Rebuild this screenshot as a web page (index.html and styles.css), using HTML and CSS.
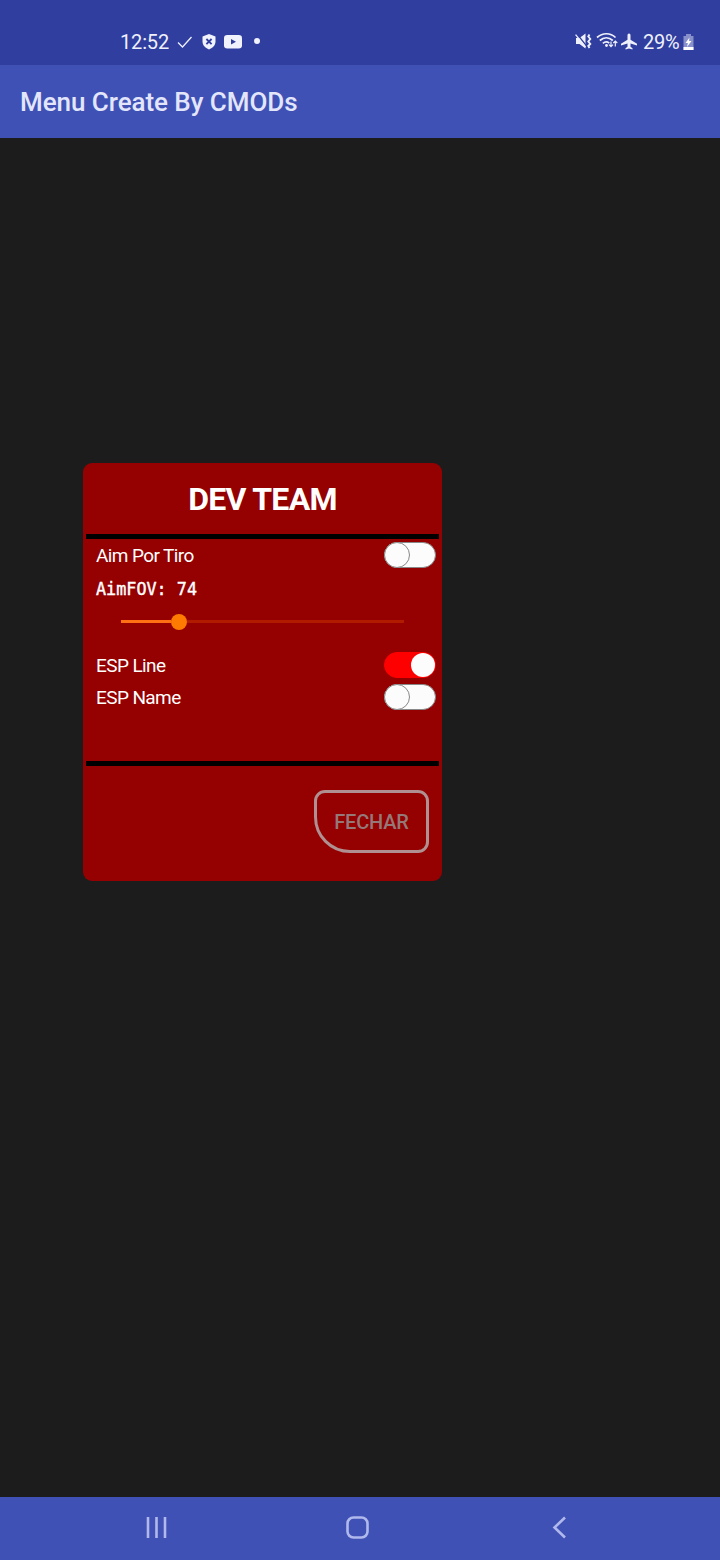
FILE: index.html
```html
<!DOCTYPE html>
<html lang="pt">
<head>
<meta charset="utf-8">
<title>Menu Create By CMODs</title>
<link rel="stylesheet" href="styles.css">
</head>
<body>
<div class="screen">
  <header class="status">
    <span class="clock">12:52</span>
    <svg class="status-left" width="90" height="24" viewBox="174 30 90 24">
      <path d="M178 42.500l4.500 4.500 9-10" fill="none" stroke="#eef0fb" stroke-width="1.300"/>
      <path d="M209 34l6.500 2.400v5c0 3.700-2.600 6.300-6.500 8-3.900-1.700-6.500-4.300-6.500-8v-5z" fill="#f0f2fc"/>
      <path d="M206.400 39l5.200 5.200m0-5.200l-5.200 5.200" stroke="#303e9f" stroke-width="1.800"/>
      <rect x="224" y="35" width="18" height="13.500" rx="3.200" fill="#f0f2fc"/>
      <path d="M231 39l5 2.800-5 2.800z" fill="#303e9f"/>
      <circle cx="257" cy="41" r="3" fill="#f0f2fc"/>
    </svg>
    <svg class="status-right" width="66" height="24" viewBox="573 30 66 24">
      <g fill="#eef0fb">
        <path d="M576 38h3.500l6-4.500v15l-6-4.500h-3.500z"/>
        <path d="M577 34l9.500 12" stroke="#303e9f" stroke-width="1.300"/>
        <path d="M575.600 34.600l9.900 12.400" stroke="#eef0fb" stroke-width="1.300"/>
        <path d="M589.500 34.500l-1.200 2 2 2.500-2 2.500 2 2.500-2 2 1.200 2" fill="none" stroke="#eef0fb" stroke-width="1.900"/>
        <path d="M597 37.500c5.500-5 13.500-5 18.500 0m-15.700 3c4-3.500 9-3.500 13 0m-10 2.800c2.200-1.700 4.500-1.700 6.500-.2" fill="none" stroke="#eef0fb" stroke-width="1.700"/>
        <circle cx="606.500" cy="45.500" r="1.400"/>
        <path d="M611 41.500v5.200m-2-2l2 2 2-2m2.300 1.800v-5.500m-2 2l2-2 2 2" fill="none" stroke="#eef0fb" stroke-width="1.200"/>
        <path d="M629 33.500c1 0 1.500.8 1.500 1.900v4.300l6.500 4v1.800l-6.500-2v3.300l2 1.500v1.200l-3.500-1-3.500 1v-1.200l2-1.500v-3.300l-6.500 2v-1.800l6.500-4v-4.300c0-1.100.5-1.900 1.500-1.900z"/>
      </g>
    </svg>
    <span class="percent">29%</span>
    <svg class="battery" width="11" height="17" viewBox="0 0 11 17">
      <path d="M3 0h5v2h2.500v14H.5V2H3z" fill="#8790ca"/>
      <path d="M.5 13h10v3H.5z" fill="#fff"/>
      <path d="M6.500 3.500L2.500 9h2.400L4 13l4.500-6H6z" fill="#fff"/>
    </svg>
  </header>
  <div class="appbar"><h1>Menu Create By CMODs</h1></div>
  <main class="content">
    <section class="card">
      <h2>DEV TEAM</h2>
      <div class="options">
        <div class="row"><span class="label">Aim Por Tiro</span><span class="switch"></span></div>
        <div class="fov">AimFOV: 74</div>
        <div class="slider"><div class="fill"></div><div class="thumb"></div><div class="rest"></div></div>
        <div class="row"><span class="label">ESP Line</span><span class="switch on"></span></div>
        <div class="row"><span class="label">ESP Name</span><span class="switch"></span></div>
      </div>
      <footer class="actions"><button class="close">FECHAR</button></footer>
    </section>
  </main>
  <nav class="nav">
    <svg width="720" height="63" viewBox="0 1497 720 63" fill="none" stroke="#b0b8ec" stroke-width="2.600">
      <path d="M148 1517v21m8.500-21v21m8.500-21v21"/>
      <rect x="347.500" y="1517.500" width="20" height="20" rx="6"/>
      <path d="M565 1517.500l-10.500 10 10.500 10"/>
    </svg>
  </nav>
</div>
</body>
</html>
```
FILE: styles.css
```css
*, *::before { box-sizing: border-box; }
body { margin: 0; font-family: Roboto, sans-serif; }
.screen { width: 720px; height: 1560px; display: flex; flex-direction: column; background: #1c1c1c; }
.status { height: 65px; background: #303e9f; color: #eef0fb; display: flex; align-items: center; padding: 19px 0 0 120px; font-size: 20px; line-height: 24px; }
.clock { width: 54px; letter-spacing: -0.15px; }
.status svg { display: block; flex: none; }
.status-right { margin-left: 309px; }
.percent { width: 39px; margin-left: 4px; white-space: nowrap; letter-spacing: -0.3px; }
.status .battery { margin: 0 0 0 0.5px; }
.appbar { height: 73px; background: #3f51b5; padding: 21px 20px 0; }
h1 { margin: 0; font-size: 26px; line-height: 32px; font-weight: 500; color: #e3e6fb; letter-spacing: -0.05px; }
.content { flex: 1; padding: 325px 0 0 83px; }
.card { width: 359px; height: 418px; background: #950000; border-radius: 9px; padding: 0 3px; }
h2 { margin: 0; height: 71px; font-size: 32px; line-height: 72px; font-weight: 700; color: #fff; text-align: center; letter-spacing: -0.7px; }
.options { height: 232px; border-top: 5px solid #000; border-bottom: 5px solid #000; }
.row { height: 32px; padding: 0 3px 0 10px; display: flex; align-items: center; justify-content: space-between; }
.label { font-size: 19px; color: #fff; letter-spacing: -0.6px; }
.switch { width: 52px; height: 26px; border-radius: 13px; background: #fcfcfc; border: 1px solid #888; display: flex; }
.switch::before { content: ""; flex: none; width: 26px; height: 26px; margin: -1px; border-radius: 50%; border: 1px solid #888; background: #fcfcfc; }
.on { background: #f00; border-color: #f00; justify-content: flex-end; align-items: center; }
.on::before { width: 24px; height: 24px; margin: 0; border: 0; }
.fov { height: 36px; padding-left: 10px; font: 400 16.8px/36px "DejaVu Sans Mono", monospace; color: #fff; -webkit-text-stroke: 0.4px #fff; }
.slider { height: 42px; padding: 0 35px 13px; display: flex; align-items: center; }
.fill { width: 50px; height: 3px; background: #ff7014; }
.thumb { width: 16px; height: 16px; border-radius: 50%; background: #ff7a00; }
.rest { flex: 1; height: 3px; background: #b11b00; }
.actions { display: flex; justify-content: flex-end; padding: 24px 10px 0 0; }
.close { width: 115px; height: 63px; border: 3px solid #b09090; border-radius: 11px 11px 11px 36px; background: none; color: #957878; font: 500 20px/24px Roboto, sans-serif; padding: 0; letter-spacing: -0.2px; }
.nav { height: 63px; background: #3f51b5; }
.nav svg { display: block; }
```
